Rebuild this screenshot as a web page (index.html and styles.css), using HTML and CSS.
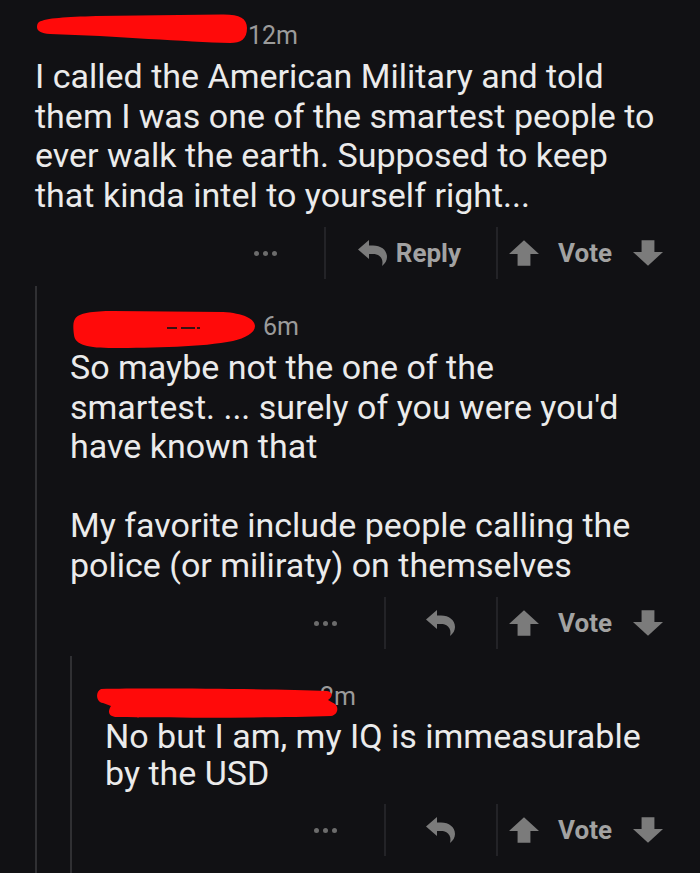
FILE: index.html
```html
<!DOCTYPE html>
<html lang="en">
<head>
<meta charset="utf-8">
<title>Comment thread</title>
<link rel="stylesheet" href="styles.css">
</head>
<body>
<main class="thread">
  <article class="comment">
    <div class="meta">
      <svg class="redact redact-1" viewBox="0 0 212 30" aria-hidden="true"><path d="M3 8 C10 4 30 3 60 2 L185 0.5 C203 0 211 4 211 14 C211 25 205 29 194 29 C150 28 80 22 14 20 C5 19.5 1 17 1 13 C1 10 2 9 3 8 Z"/></svg>
      <span class="age">12m</span>
    </div>
    <div class="body">
      <p>I called the American Military and told<br>them I was one of the smartest people to<br>ever walk the earth. Supposed to keep<br>that kinda intel to yourself right...</p>
    </div>
    <div class="actions">
      <span class="more"><i></i><i></i><i></i></span>
      <span class="divider"></span>
      <span class="reply">
        <svg class="reply-icon" viewBox="0 0 30 26" aria-hidden="true"><path d="M0 9.5 L11 0 V5.5 H15 C23 5.5 29 10 29 17 C29 20.5 27 23.5 24 26 C25 22 24.5 19 22 16.5 C20 14.5 17.5 14 15 14 H11 V19 Z"/></svg>
        <span>Reply</span>
      </span>
      <span class="divider"></span>
      <span class="vote">
        <svg class="arrow" viewBox="0 0 28 24" aria-hidden="true"><path d="M14 0 L28 13 H20 V24 H8 V13 H0 Z"/></svg>
        <span class="vote-label">Vote</span>
        <svg class="arrow" viewBox="0 0 28 24" aria-hidden="true"><path d="M14 24 L28 11 H20 V0 H8 V11 H0 Z"/></svg>
      </span>
    </div>

    <div class="replies">
      <article class="comment">
        <div class="meta">
          <svg class="redact redact-2" viewBox="0 0 182 37" aria-hidden="true"><path d="M2 8 C5 2 20 0 40 0 L150 1 C170 2 182 8 182 15 C182 22 172 27 160 30 C130 36 80 37 40 37 C15 37 2 34 1 24 C0 16 0 11 2 8 Z"/><path class="peek" d="M94 17 H104 M108 17 H122 M124 17 H127"/></svg>
          <span class="age">6m</span>
        </div>
        <div class="body">
          <p>So maybe not the one of the<br>smartest. ... surely of you were you'd<br>have known that</p>
          <p>My favorite include people calling the<br>police (or miliraty) on themselves</p>
        </div>
        <div class="actions">
          <span class="more"><i></i><i></i><i></i></span>
          <span class="divider"></span>
          <span class="reply reply-compact">
            <svg class="reply-icon" viewBox="0 0 30 26" aria-hidden="true"><path d="M0 9.5 L11 0 V5.5 H15 C23 5.5 29 10 29 17 C29 20.5 27 23.5 24 26 C25 22 24.5 19 22 16.5 C20 14.5 17.5 14 15 14 H11 V19 Z"/></svg>
          </span>
          <span class="divider"></span>
          <span class="vote">
            <svg class="arrow" viewBox="0 0 28 24" aria-hidden="true"><path d="M14 0 L28 13 H20 V24 H8 V13 H0 Z"/></svg>
            <span class="vote-label">Vote</span>
            <svg class="arrow" viewBox="0 0 28 24" aria-hidden="true"><path d="M14 24 L28 11 H20 V0 H8 V11 H0 Z"/></svg>
          </span>
        </div>

        <div class="replies replies-last">
          <article class="comment">
            <div class="meta">
              <svg class="redact redact-3" viewBox="0 0 243 30" aria-hidden="true"><path d="M6 1 C60 0 180 1 232 3 C238 4 238 9 233 12 L240 16 C244 19 243 27 236 28 C180 30 80 30 22 29 C14 29 12 24 16 18 L8 15 C1 14 0 4 6 1 Z"/></svg>
              <span class="age">2m</span>
            </div>
            <div class="body body-compact">
              <p>No but I am, my IQ is immeasurable<br>by the USD</p>
            </div>
            <div class="actions">
              <span class="more"><i></i><i></i><i></i></span>
              <span class="divider"></span>
              <span class="reply reply-compact">
                <svg class="reply-icon" viewBox="0 0 30 26" aria-hidden="true"><path d="M0 9.5 L11 0 V5.5 H15 C23 5.5 29 10 29 17 C29 20.5 27 23.5 24 26 C25 22 24.5 19 22 16.5 C20 14.5 17.5 14 15 14 H11 V19 Z"/></svg>
              </span>
              <span class="divider"></span>
              <span class="vote">
                <svg class="arrow" viewBox="0 0 28 24" aria-hidden="true"><path d="M14 0 L28 13 H20 V24 H8 V13 H0 Z"/></svg>
                <span class="vote-label">Vote</span>
                <svg class="arrow" viewBox="0 0 28 24" aria-hidden="true"><path d="M14 24 L28 11 H20 V0 H8 V11 H0 Z"/></svg>
              </span>
            </div>
          </article>
        </div>
      </article>
    </div>
  </article>
</main>
</body>
</html>
```

FILE: styles.css
```css
html, body {
  margin: 0;
  padding: 0;
  background: #111114;
  overflow: hidden;
}

.thread {
  height: 873px;
  box-sizing: border-box;
  overflow: hidden;
  padding: 19px 37px 0 35px;
  font-family: Roboto, "Liberation Sans", sans-serif;
  color: #ebebeb;
}

.comment {
  display: block;
}

.replies {
  margin-top: 7px;
  border-left: 2px solid #303033;
  padding-left: 33px;
}

.replies > .comment {
  padding-top: 24px;
}

.replies-last {
  padding-bottom: 60px;
}

/* header with redacted user name */
.meta {
  display: flex;
  align-items: flex-start;
  height: 34px;
  line-height: 34px;
  margin-bottom: 4px;
  font-size: 25px;
  color: #9b9b9b;
}

.redact {
  flex: none;
  display: block;
  fill: #ff0a0a;
  position: relative;
  z-index: 1;
}

.redact .peek {
  fill: none;
  stroke: #3a1212;
  stroke-width: 2;
}

.redact-1 {
  width: 212px;
  height: 30px;
  margin: -5px 0 0 1px;
}

.redact-2 {
  width: 182px;
  height: 37px;
  margin: 1px 8px 0 3px;
}

.redact-3 {
  width: 243px;
  height: 30px;
  margin: 8px -18px 0 -10px;
}

.age {
  white-space: nowrap;
}

/* comment text */
.body {
  font-size: 34px;
  line-height: 39.5px;
}

.body-compact {
  line-height: 37px;
}

.body p {
  margin: 0;
}

.body p + p {
  margin-top: 39.5px;
}

/* action bar */
.actions {
  display: flex;
  justify-content: flex-end;
  align-items: center;
  height: 52px;
  margin-top: 12px;
  font-size: 26px;
  font-weight: 700;
  color: #a2a2a2;
}

.more {
  display: flex;
  gap: 4px;
  margin-right: 47px;
}

.more i {
  display: block;
  width: 5px;
  height: 5px;
  border-radius: 50%;
  background: #6c6c6c;
}

.divider {
  width: 2px;
  height: 52px;
  background: #232327;
}

.reply {
  display: flex;
  align-items: center;
  gap: 8px;
  padding: 0 35px 0 32px;
}

.reply-compact {
  padding: 0 40px 0 40px;
}

.reply-icon {
  width: 30px;
  height: 26px;
  fill: #7b7b7b;
  display: block;
}

.vote {
  display: flex;
  align-items: center;
  padding-left: 11px;
}

.vote-label {
  margin: 0 21px 0 19px;
}

.arrow {
  width: 30px;
  height: 26px;
  fill: #7b7b7b;
  display: block;
}
```
